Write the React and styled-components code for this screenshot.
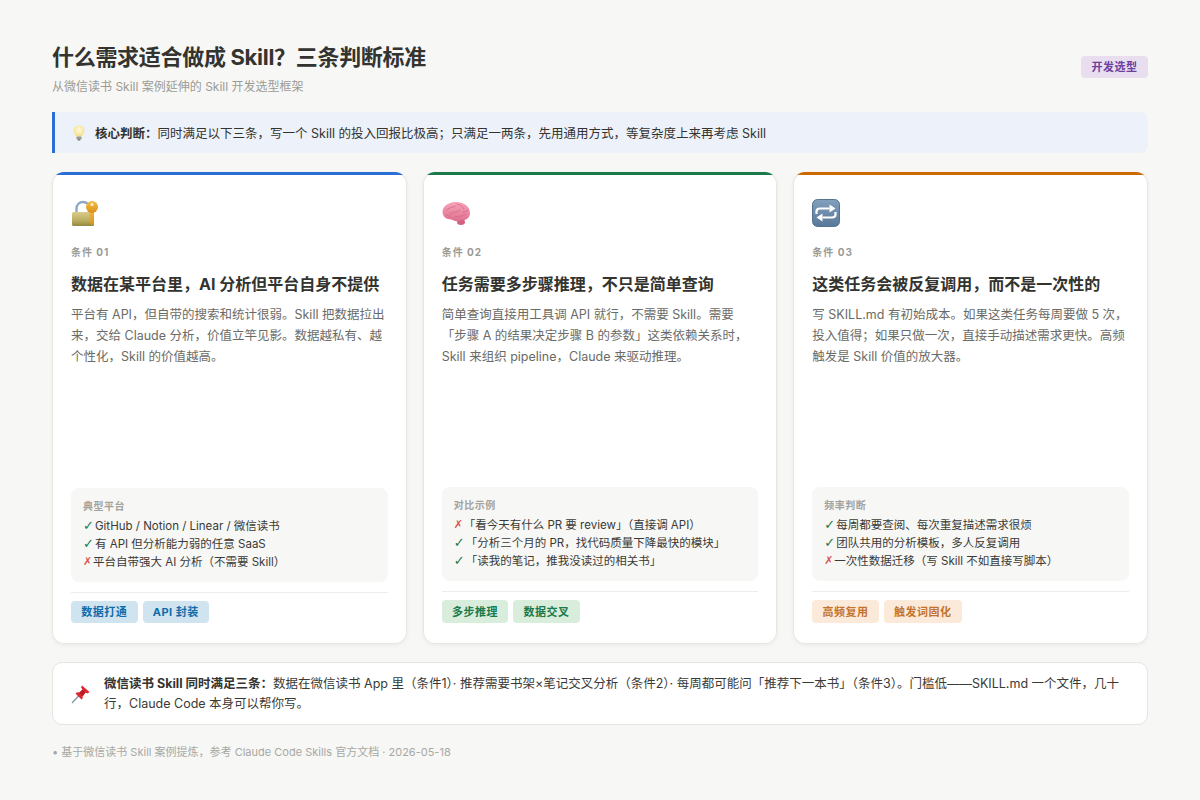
import React from 'react';
import styled, { createGlobalStyle } from 'styled-components';

const GlobalStyle = createGlobalStyle`
  html, body { margin: 0; padding: 0; }
  body {
    background: #f7f7f5;
    font-family: Inter, "Noto Sans CJK SC", "Noto Sans", sans-serif;
    color: #2f2f2b;
  }
  * { box-sizing: border-box; }
`;

const Page = styled.div`
  width: 1200px;
  height: 800px;
  padding: 44px 52px 0;
  display: flex;
  flex-direction: column;
  overflow: hidden;
`;

const Header = styled.header`
  display: flex;
  justify-content: space-between;
  align-items: flex-start;
  height: 52px;
  margin-bottom: 16px;
`;

const Title = styled.h1`
  margin: 0 0 7px;
  font-size: 22px;
  line-height: 27px;
  font-weight: 700;
  letter-spacing: -0.3px;
  color: #33332f;
`;

const Subtitle = styled.p`
  margin: 0;
  font-size: 12px;
  line-height: 18px;
  color: #9b9b96;
`;

const Badge = styled.span`
  display: block;
  height: 22px;
  margin-top: 12px;
  padding: 0 10.5px;
  border-radius: 4px;
  background: #e8deef;
  color: #6b3fa0;
  font-size: 11px;
  line-height: 23px;
  font-weight: 700;
  letter-spacing: 0.5px;
`;

const Callout = styled.div`
  display: flex;
  align-items: center;
  gap: 9px;
  height: 41px;
  padding-left: 17px;
  margin-bottom: 19px;
  border-left: 3px solid #2b6fd6;
  border-radius: 0 8px 8px 0;
  background: #edf2fa;
  font-size: 12.5px;
  color: #33332f;
  strong { font-weight: 700; }
`;

const Cards = styled.section`
  display: grid;
  grid-template-columns: repeat(3, 1fr);
  gap: 16px;
  height: 472px;
  margin-bottom: 18px;
`;

const Card = styled.article`
  position: relative;
  display: flex;
  flex-direction: column;
  padding: 27px 19px 21px;
  background: #fff;
  border-radius: 12px;
  overflow: hidden;
  box-shadow: inset 0 0 0 1px #e6e6e3, 0 1px 4px rgba(0, 0, 0, 0.06);
  &::before {
    content: '';
    position: absolute;
    top: 0;
    left: 0;
    right: 0;
    height: 3px;
    background: ${p => p.$accent};
  }
`;

const IconSlot = styled.div`
  height: 28px;
  margin-bottom: 17px;
  svg { display: block; }
`;

const Condition = styled.div`
  font-size: 10px;
  line-height: 16px;
  font-weight: 700;
  letter-spacing: 1px;
  color: #9b9b96;
`;

const CardTitle = styled.h2`
  margin: 14px 0 9px;
  font-size: 16px;
  line-height: 21px;
  font-weight: 700;
  color: #33332f;
`;

const CardText = styled.p`
  margin: 0;
  font-size: 12.5px;
  line-height: 21px;
  color: #6b6b66;
`;

const Panel = styled.div`
  margin-top: auto;
  padding: 10px 12px 11px;
  border-radius: 8px;
  background: #f7f7f5;
`;

const PanelLabel = styled.div`
  margin-bottom: 3px;
  font-size: 10px;
  line-height: 16px;
  font-weight: 700;
  letter-spacing: 0.5px;
  color: #a3a39e;
`;

const PanelRow = styled.div`
  display: flex;
  align-items: center;
  height: 18px;
  font-size: 11.5px;
  line-height: 18px;
  color: #3a3a36;
  white-space: nowrap;
`;

const Mark = styled.span`
  flex: none;
  width: ${p => (p.$ok ? 10 : 8)}px;
  margin-right: 2px;
  font-family: "DejaVu Sans", sans-serif;
  font-size: ${p => (p.$ok ? 13 : 11)}px;
  line-height: 18px;
  font-weight: 700;
  overflow: hidden;
  color: ${p => (p.$ok ? '#1a7a4a' : '#d9534f')};
`;

const Tags = styled.div`
  display: flex;
  gap: 5px;
  margin-top: 10px;
  padding-top: 8px;
  border-top: 1px solid #ececea;
`;

const Tag = styled.span`
  height: ${p => (p.$tall ? 23 : 22)}px;
  padding: 0 10.25px;
  border-radius: 4px;
  background: ${p => p.$bg};
  color: ${p => p.$fg};
  font-size: 11px;
  line-height: ${p => (p.$tall ? 24 : 23)}px;
  font-weight: 700;
  letter-spacing: 0.5px;
`;

const Note = styled.div`
  display: flex;
  align-items: center;
  gap: 13px;
  height: 63px;
  padding: 0 18px;
  margin-bottom: 19px;
  background: #fff;
  border: 1px solid #e4e4e1;
  border-radius: 10px;
  font-size: 12.5px;
  line-height: 19.2px;
  color: #3a3a36;
  strong { font-weight: 700; color: #33332f; }
  svg { flex: none; }
`;

const Footer = styled.footer`
  font-size: 11px;
  line-height: 16px;
  color: #a8a8a3;
`;

const LockIcon = () => (
  <svg width="28" height="28" viewBox="0 0 28 28">
    <defs>
      <linearGradient id="lockBody" x1="0" y1="0" x2="0" y2="1">
        <stop offset="0" stopColor="#d9cc8c" />
        <stop offset="0.6" stopColor="#bcae60" />
        <stop offset="1" stopColor="#93883f" />
      </linearGradient>
      <linearGradient id="lockKey" x1="0" y1="0" x2="0" y2="1">
        <stop offset="0" stopColor="#f5bd45" />
        <stop offset="1" stopColor="#d9921c" />
      </linearGradient>
    </defs>
    <path d="M5.500 14V9.500C5.500 5.500 8.500 3 12 3C14 3 15.500 3.500 17 5" fill="none" stroke="#8fa9c4" strokeWidth="2.400" />
    <rect x="1" y="13" width="22" height="14" rx="1.500" fill="url(#lockBody)" />
    <path d="M18.500 9H23V24L21 26L18.500 24V22.500L20 21.500L18.500 20.500V19L20 18L18.500 17Z" fill="url(#lockKey)" />
    <circle cx="21" cy="8" r="6" fill="url(#lockKey)" />
    <circle cx="21" cy="5.500" r="1.500" fill="#fff3c9" />
  </svg>
);

const BrainIcon = () => (
  <svg width="28" height="28" viewBox="0 0 28 28">
    <defs>
      <linearGradient id="brainFill" x1="0" y1="0" x2="0" y2="1">
        <stop offset="0" stopColor="#f6a5b9" />
        <stop offset="1" stopColor="#e06f8e" />
      </linearGradient>
    </defs>
    <ellipse cx="19" cy="23" rx="4" ry="3" fill="#d0627f" />
    <path d="M0.500 12.500C0.500 7.500 6 3.500 13 3C21 2.500 28 7 28 14C28 18.500 24.500 21.500 20 21C17 23 12.500 22.500 9.500 20.500C4 20.500 0.500 17.500 0.500 12.500Z" fill="url(#brainFill)" />
    <path d="M4.500 11C8 7.500 12 8.500 14 7M8 15C11 12 15 14 18 11M15 5C18 6 21 7 22 10M12 18.500C15 16.500 20 18.500 24 15M4 15.500C6 16.500 7 17 9 18.500M21 13C23 13 25 12 26 11" fill="none" stroke="#d76c8c" strokeWidth="0.900" strokeLinecap="round" />
  </svg>
);

const RepeatIcon = () => (
  <svg width="28" height="28" viewBox="0 0 28 28">
    <defs>
      <linearGradient id="repeatFill" x1="0" y1="0" x2="0" y2="1">
        <stop offset="0" stopColor="#82a0bd" />
        <stop offset="1" stopColor="#587899" />
      </linearGradient>
    </defs>
    <rect x="0.500" y="0.500" width="27" height="27" rx="5" fill="url(#repeatFill)" stroke="#567492" />
    <path d="M4.500 15V12.500C4.500 10.500 6 9.500 8 9.500H17.500" fill="none" stroke="#fff" strokeWidth="2.200" />
    <path d="M17.500 5.500L23.500 9.500L17.500 13.500Z" fill="#fff" />
    <path d="M23.500 13V15.500C23.500 17.500 22 18.500 20 18.500H10.500" fill="none" stroke="#fff" strokeWidth="2.200" />
    <path d="M10.500 14.500L4.500 18.500L10.500 22.500Z" fill="#fff" />
  </svg>
);

const BulbIcon = () => (
  <svg width="14" height="16" viewBox="0 0 14 16">
    <defs>
      <radialGradient id="bulbFill" cx="0.500" cy="0.400" r="0.600">
        <stop offset="0" stopColor="#fffbe0" />
        <stop offset="1" stopColor="#f5dc84" />
      </radialGradient>
    </defs>
    <path d="M7 0.500C10.300 0.500 12.500 2.900 12.500 5.600C12.500 8 10.500 9.300 9.800 11.500H4.200C3.500 9.300 1.500 8 1.500 5.600C1.500 2.900 3.700 0.500 7 0.500Z" fill="url(#bulbFill)" />
    <rect x="4.500" y="11.500" width="5" height="3" rx="0.800" fill="#9a9a94" />
    <rect x="5.700" y="14.300" width="2.600" height="1.200" rx="0.500" fill="#6e6e6a" />
  </svg>
);

const PinIcon = () => (
  <svg width="20" height="20" viewBox="0 0 20 20">
    <path d="M1 19L8 11.500" stroke="#7f8fa6" strokeWidth="1.200" />
    <path d="M11 1.500L18.500 8L16.500 9.500L14.500 8.500L11.500 12.500C12 14 11.500 15 10.500 15.500L4.500 9.500C5.500 8.500 7 8 8.500 8.500L11.500 5.500L10 3.500Z" fill="#e0262d" />
    <path d="M11.500 5.500L14.500 8.500L11.500 12.500L8.500 8.500Z" fill="#b81c24" />
  </svg>
);

const cards = [
  {
    accent: '#2b6fd6',
    icon: <LockIcon />,
    num: '条件 01',
    title: '数据在某平台里，AI 分析但平台自身不提供',
    text: ['平台有 API，但自带的搜索和统计很弱。Skill 把数据拉出', '来，交给 Claude 分析，价值立竿见影。数据越私有、越', '个性化，Skill 的价值越高。'],
    panel: '典型平台',
    rows: [
      [true, 'GitHub / Notion / Linear / 微信读书'],
      [true, '有 API 但分析能力弱的任意 SaaS'],
      [false, '平台自带强大 AI 分析（不需要 Skill）'],
    ],
    tagBg: '#d0e4f0',
    tagFg: '#0f6ca8',
    tags: ['数据打通', 'API 封装'],
    tall: false,
  },
  {
    accent: '#1a7a4a',
    icon: <BrainIcon />,
    num: '条件 02',
    title: '任务需要多步骤推理，不只是简单查询',
    text: ['简单查询直接用工具调 API 就行，不需要 Skill。需要', '「步骤 A 的结果决定步骤 B 的参数」这类依赖关系时，', 'Skill 来组织 pipeline，Claude 来驱动推理。'],
    panel: '对比示例',
    rows: [
      [false, '「看今天有什么 PR 要 review」（直接调 API）'],
      [true, '「分析三个月的 PR，找代码质量下降最快的模块」'],
      [true, '「读我的笔记，推我没读过的相关书」'],
    ],
    tagBg: '#d9eddd',
    tagFg: '#1a7a4a',
    tags: ['多步推理', '数据交叉'],
    tall: true,
  },
  {
    accent: '#cc6a00',
    icon: <RepeatIcon />,
    num: '条件 03',
    title: '这类任务会被反复调用，而不是一次性的',
    text: ['写 SKILL.md 有初始成本。如果这类任务每周要做 5 次，', '投入值得；如果只做一次，直接手动描述需求更快。高频', '触发是 Skill 价值的放大器。'],
    panel: '频率判断',
    rows: [
      [true, '每周都要查阅、每次重复描述需求很烦'],
      [true, '团队共用的分析模板，多人反复调用'],
      [false, '一次性数据迁移（写 Skill 不如直接写脚本）'],
    ],
    tagBg: '#fbe9da',
    tagFg: '#c4742a',
    tags: ['高频复用', '触发词固化'],
    tall: true,
  },
];

export default function App() {
  return (
    <Page>
      <GlobalStyle />
      <Header>
        <div>
          <Title>什么需求适合做成 Skill？三条判断标准</Title>
          <Subtitle>从微信读书 Skill 案例延伸的 Skill 开发选型框架</Subtitle>
        </div>
        <Badge>开发选型</Badge>
      </Header>

      <Callout>
        <BulbIcon />
        <span><strong>核心判断：</strong>同时满足以下三条，写一个 Skill 的投入回报比极高；只满足一两条，先用通用方式，等复杂度上来再考虑 Skill</span>
      </Callout>

      <Cards>
        {cards.map(c => (
          <Card key={c.num} $accent={c.accent}>
            <IconSlot>{c.icon}</IconSlot>
            <Condition>{c.num}</Condition>
            <CardTitle>{c.title}</CardTitle>
            <CardText>{c.text.map(t => <React.Fragment key={t}>{t}<br /></React.Fragment>)}</CardText>
            <Panel>
              <PanelLabel>{c.panel}</PanelLabel>
              {c.rows.map(([ok, t]) => (
                <PanelRow key={t}><Mark $ok={ok}>{ok ? '✓' : '✗'}</Mark><span>{t}</span></PanelRow>
              ))}
            </Panel>
            <Tags>
              {c.tags.map(t => <Tag key={t} $bg={c.tagBg} $fg={c.tagFg} $tall={c.tall}>{t}</Tag>)}
            </Tags>
          </Card>
        ))}
      </Cards>

      <Note>
        <PinIcon />
        <div>
          <strong>微信读书 Skill 同时满足三条：</strong>数据在微信读书 App 里（条件1）· 推荐需要书架×笔记交叉分析（条件2）· 每周都可能问「推荐下一本书」（条件3）。门槛低——SKILL.md 一个文件，几十行，Claude Code 本身可以帮你写。
        </div>
      </Note>

      <Footer>• 基于微信读书 Skill 案例提炼，参考 Claude Code Skills 官方文档 · 2026-05-18</Footer>
    </Page>
  );
}
